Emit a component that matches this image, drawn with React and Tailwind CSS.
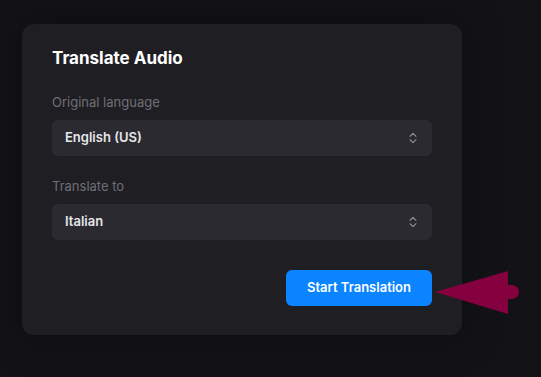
import { ChevronsUpDown } from 'lucide-react';

function SelectBox({ value }) {
  return (
    <div className="flex h-9 items-center justify-between rounded-md bg-[#2a2a30] pl-[13px] pr-[12px]">
      <span className="text-[13px] font-semibold text-[#e6e6e8]">{value}</span>
      <ChevronsUpDown size={14} strokeWidth={2} className="text-[#8b8b92]" />
    </div>
  );
}

export default function App() {
  return (
    <div
      className="relative h-[377px] w-[541px] overflow-hidden bg-[#131317] pl-[22px] pt-6"
      style={{ fontFamily: 'Inter, "Noto Sans", sans-serif' }}
    >
      <div className="flex h-[311px] w-[440px] flex-col rounded-xl bg-[#1f1f23] px-[30px] pt-[22px] shadow-[0_0_40px_rgba(0,0,0,0.35)]">
        <h2 className="text-[17px] leading-6 font-bold text-white">Translate Audio</h2>
        <label className="mt-[22px] text-[13px] leading-5 text-[#6e6e76]">Original language</label>
        <div className="mt-2">
          <SelectBox value="English (US)" />
        </div>
        <label className="mt-5 text-[13px] leading-5 text-[#6e6e76]">Translate to</label>
        <div className="mt-2">
          <SelectBox value="Italian" />
        </div>
        <div className="mt-[30px] flex justify-end">
          <button className="h-9 w-[146px] rounded-md bg-[#0a84ff] text-[13px] font-semibold text-white">
            Start Translation
          </button>
        </div>
      </div>

      <svg className="absolute left-0 top-0" width="541" height="377" viewBox="0 0 541 377">
        <polygon points="435,292 508,271 508,314" fill="#85003f" />
        <circle cx="512" cy="292" r="7" fill="#85003f" />
        <rect x="500" y="285" width="12" height="14" fill="#85003f" />
      </svg>
    </div>
  );
}
